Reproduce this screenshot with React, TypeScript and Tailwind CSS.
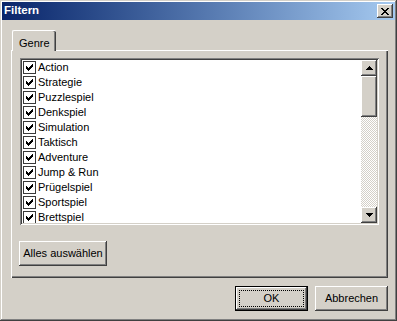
const raised =
  "shadow-[inset_-1px_-1px_#404040,inset_1px_1px_#ffffff,inset_-2px_-2px_#808080,inset_2px_2px_#d4d0c8]";
const sunken =
  "shadow-[inset_1px_1px_#808080,inset_-1px_-1px_#ffffff,inset_2px_2px_#404040,inset_-2px_-2px_#d4d0c8]";

const genres = [
  "Action",
  "Strategie",
  "Puzzlespiel",
  "Denkspiel",
  "Simulation",
  "Taktisch",
  "Adventure",
  "Jump & Run",
  "Prügelspiel",
  "Sportspiel",
  "Brettspiel",
];

// tiny pixel glyphs, drawn like the classic window theme does
function Pixels({ rows }: { rows: string[] }) {
  const w = rows[0].length;
  const h = rows.length;
  return (
    <svg width={w} height={h} viewBox={`0 0 ${w} ${h}`} shapeRendering="crispEdges">
      {rows.flatMap((row, y) =>
        row.split("").map((c, x) =>
          c === "#" ? <rect key={`${x}-${y}`} x={x} y={y} width={1} height={1} fill="#000" /> : null
        )
      )}
    </svg>
  );
}

const checkGlyph = ["......#", ".....##", "#...###", "##.###.", "#####..", ".###...", "..#...."];
const closeGlyph = ["##....##", ".##..##.", "..####..", "...##...", "..####..", ".##..##.", "##....##"];
const upGlyph = ["...#...", "..###..", ".#####.", "#######"];
const downGlyph = ["#######", ".#####.", "..###..", "...#..."];

function CheckItem({ label }: { label: string }) {
  return (
    <div className="flex h-[15px] shrink-0 items-center pl-[1px]">
      <div className="flex h-[13px] w-[13px] items-center justify-center border border-[#3a3a3a] bg-white">
        <Pixels rows={checkGlyph} />
      </div>
      <span className="ml-[2px] leading-none">{label}</span>
    </div>
  );
}

function ScrollBar() {
  return (
    <div className="flex w-[16px] shrink-0 flex-col">
      <div className={`flex h-[16px] items-center justify-center bg-[#d4d0c8] ${raised}`}>
        <Pixels rows={upGlyph} />
      </div>
      <div className={`h-[41px] bg-[#d4d0c8] ${raised}`} />
      <div className="flex-1 bg-[image:repeating-conic-gradient(#ffffff_0_25%,#d4d0c8_0_50%)] bg-[length:2px_2px]" />
      <div className={`flex h-[16px] items-center justify-center bg-[#d4d0c8] ${raised}`}>
        <Pixels rows={downGlyph} />
      </div>
    </div>
  );
}

export default function App() {
  return (
    <div
      className="flex h-[321px] w-[397px] flex-col bg-[#d4d0c8] p-[2px] text-[11px] text-black shadow-[inset_-1px_-1px_#404040,inset_1px_1px_#d4d0c8,inset_-2px_-2px_#808080,inset_2px_2px_#ffffff]"
      style={{ fontFamily: '"Liberation Sans", Arial, sans-serif' }}
    >
      {/* Title bar */}
      <div className="flex h-[18px] shrink-0 items-center justify-between bg-gradient-to-r from-[#0a246a] to-[#a6caf0] pl-[2px] pr-[2px]">
        <span className="text-[11.5px] font-bold text-white">Filtern</span>
        <div className={`flex h-[14px] w-[16px] items-center justify-center bg-[#d4d0c8] ${raised}`}>
          <Pixels rows={closeGlyph} />
        </div>
      </div>

      {/* Tab strip */}
      <div className="mt-[10px] flex">
        <div className="relative z-10 -mb-[1px] ml-[10px] flex h-[21px] w-[44px] items-start rounded-tl-[2px] rounded-tr-[2px] border-l border-t border-white bg-[#d4d0c8] pl-[6px] pt-[4px] shadow-[inset_-1px_0_#404040,inset_-2px_0_#808080]">
          Genre
        </div>
      </div>

      {/* Tab panel */}
      <div className="ml-[9px] flex h-[228px] w-[377px] flex-col border-l border-t border-white pl-[8px] pt-[7px] shadow-[inset_-1px_-1px_#404040,inset_-2px_-2px_#808080]">
        <div className={`flex h-[167px] w-[359px] bg-white p-[2px] ${sunken}`}>
          <div className="flex flex-1 flex-col overflow-hidden">
            {genres.map((g) => (
              <CheckItem key={g} label={g} />
            ))}
          </div>
          <ScrollBar />
        </div>
        <button
          className={`-ml-[1px] mt-[16px] flex h-[25px] w-[88px] items-center justify-center bg-[#d4d0c8] ${raised}`}
        >
          Alles auswählen
        </button>
      </div>

      {/* Dialog buttons */}
      <div className="ml-[9px] mt-[8px] flex w-[377px] justify-end gap-[7px]">
        <button className="relative flex h-[25px] w-[73px] items-center justify-center border border-black bg-[#d4d0c8] shadow-[inset_-1px_-1px_#404040,inset_1px_1px_#ffffff,inset_-2px_-2px_#808080]">
          OK
          <span className="absolute inset-[3px] border border-dotted border-black" />
        </button>
        <button className={`flex h-[25px] w-[73px] items-center justify-center bg-[#d4d0c8] ${raised}`}>
          Abbrechen
        </button>
      </div>
    </div>
  );
}
